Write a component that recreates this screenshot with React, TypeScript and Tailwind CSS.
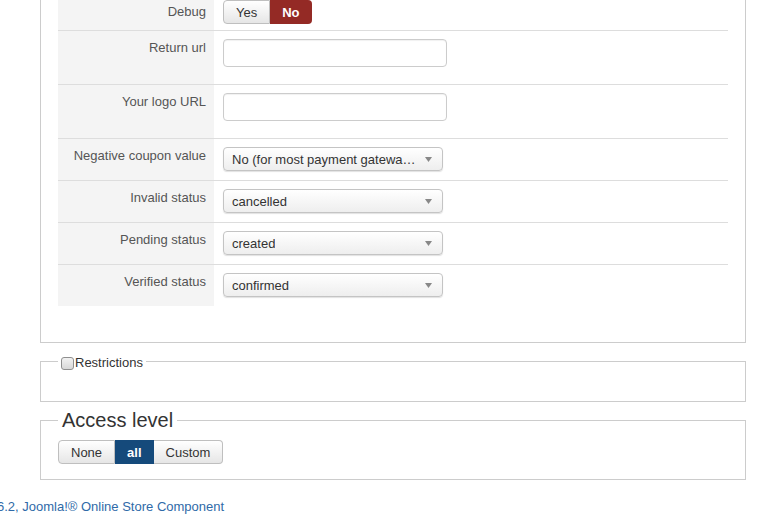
import React from "react";

type Row =
  | { label: string; kind: "input" }
  | { label: string; kind: "select"; value: string };

const rows: Row[] = [
  { label: "Return url", kind: "input" },
  { label: "Your logo URL", kind: "input" },
  { label: "Negative coupon value", kind: "select", value: "No (for most payment gatewa…" },
  { label: "Invalid status", kind: "select", value: "cancelled" },
  { label: "Pending status", kind: "select", value: "created" },
  { label: "Verified status", kind: "select", value: "confirmed" },
];

function SelectBox({ value }: { value: string }) {
  return (
    <div className="flex h-[24px] w-[220px] items-center justify-between rounded-[4px] border border-[#c4c4c4] bg-gradient-to-b from-white to-[#eeeeee] pl-[8px] pr-[10px] pt-px text-[13px] text-[#333] shadow-[0_1px_1px_rgba(0,0,0,0.12)]">
      <span className="truncate">{value}</span>
      <svg width="7" height="5" viewBox="0 0 7 5" className="shrink-0">
        <path d="M0 0h7L3.5 5z" fill="#888" />
      </svg>
    </div>
  );
}

function TextBox() {
  return (
    <div className="h-[28px] w-[224px] rounded-[4px] border border-[#cccccc] bg-white shadow-[inset_0_1px_1px_rgba(0,0,0,0.06)]" />
  );
}

function Toggle({
  items,
  active,
  activeClass,
}: {
  items: string[];
  active: string;
  activeClass: string;
}) {
  return (
    <div className="flex h-[24px] text-[13px]">
      {items.map((it, i) => {
        const on = it === active;
        const first = i === 0;
        const last = i === items.length - 1;
        return (
          <div
            key={it}
            className={[
              "flex items-center px-3 leading-none",
              first ? "rounded-l-[4px]" : "",
              last ? "rounded-r-[4px]" : "",
              on
                ? activeClass + " font-bold text-white"
                : "border border-[#bfbfbf] bg-gradient-to-b from-white to-[#e6e6e6] text-[#333]",
              !on && !first ? "border-l-0" : "",
            ].join(" ")}
          >
            {it}
          </div>
        );
      })}
    </div>
  );
}

export default function App() {
  return (
    <div
      className="relative h-[519px] w-[766px] overflow-hidden bg-white text-[13px] text-[#555]"
      style={{ fontFamily: '"Liberation Sans", Arial, sans-serif' }}
    >
      {/* payment settings fieldset, top scrolled away */}
      <div className="ml-[40px] mt-[-9px] w-[706px] border border-t-0 border-[#cccccc] px-[17px] pb-[36px]">
        <div className="w-[670px]">
          <div className="flex h-[39px]">
            <div className="w-[156px] bg-[#f4f4f4] pr-2 pt-[12px] text-right leading-[18px]">
              Debug
            </div>
            <div className="pl-[9px] pt-[9px]">
              <Toggle items={["Yes", "No"]} active="No" activeClass="bg-[#942a25]" />
            </div>
          </div>
          {rows.map((r) => (
            <div
              key={r.label}
              className={
                "flex border-t border-[#dddddd] " +
                (r.kind === "input" ? "h-[54px]" : "h-[42px]")
              }
            >
              <div className="w-[156px] bg-[#f4f4f4] pr-2 pt-[8px] text-right leading-[18px]">
                {r.label}
              </div>
              <div className="pl-[9px] pt-[8px]">
                {r.kind === "input" ? <TextBox /> : <SelectBox value={r.value} />}
              </div>
            </div>
          ))}
        </div>
      </div>

      <fieldset className="ml-[40px] mt-[7px] w-[706px] border border-[#cccccc] px-[17px] pb-[29px]">
        <legend className="flex items-center px-[3px] pt-[4px] leading-[18px] text-[#333]">
          <span className="mr-px inline-block h-[13px] w-[13px] rounded-[3px] border border-[#8f8f8f] bg-gradient-to-b from-[#f2f2f2] to-[#d8d8d8]" />
          Restrictions
        </legend>
      </fieldset>

      <fieldset className="ml-[40px] mt-[3px] w-[706px] border border-[#cccccc] px-[17px] pb-[15px]">
        <legend className="px-[4px] text-[20px] leading-[30px] text-[#333]">Access level</legend>
        <div className="mt-[5px]">
          <Toggle
            items={["None", "all", "Custom"]}
            active="all"
            activeClass="bg-[#154a7b]"
          />
        </div>
      </fieldset>

      <div className="ml-[-3px] mt-[17px] text-[13px] text-[#2f6aa8]">
        6.2, Joomla!® Online Store Component
      </div>
    </div>
  );
}
